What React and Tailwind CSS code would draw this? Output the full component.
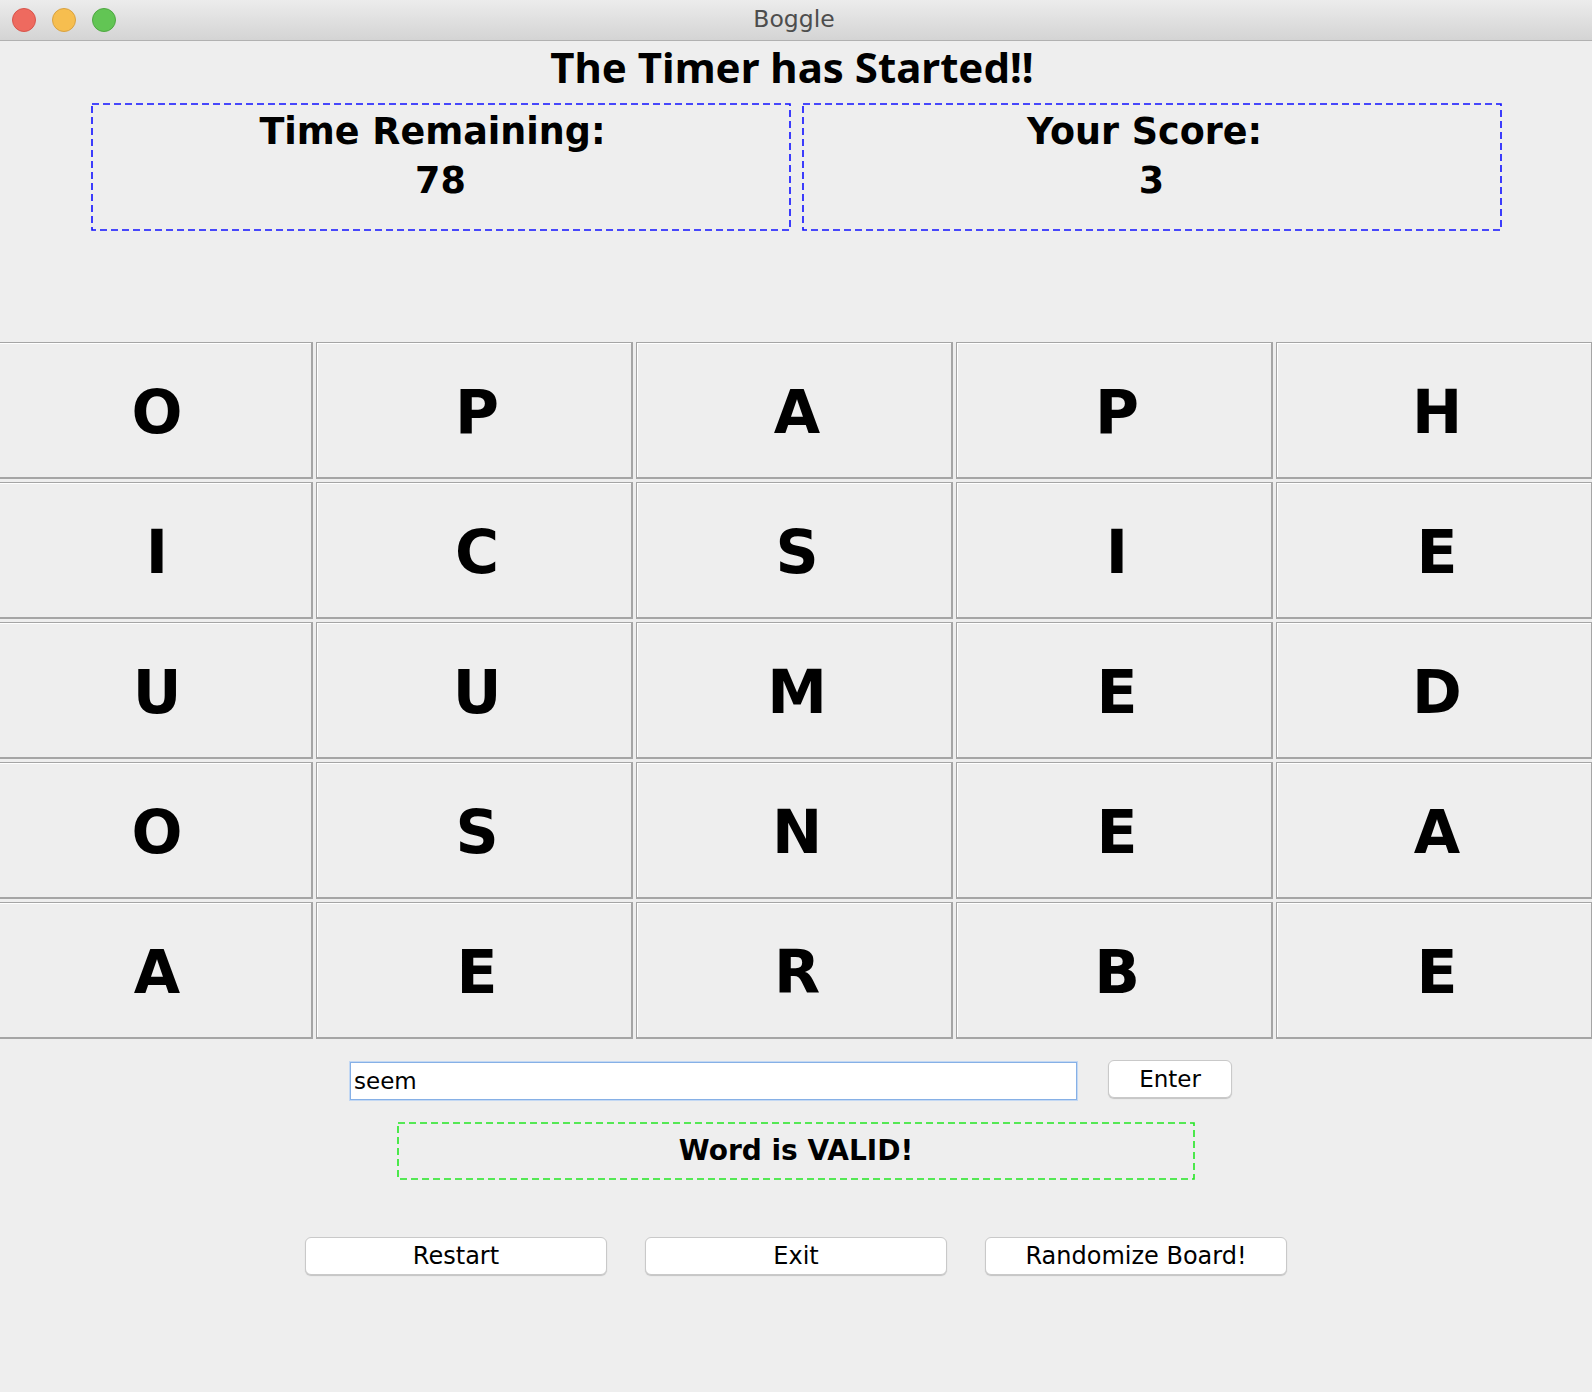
import React from 'react';

const board = [
    ['O', 'P', 'A', 'P', 'H'],
    ['I', 'C', 'S', 'I', 'E'],
    ['U', 'U', 'M', 'E', 'D'],
    ['O', 'S', 'N', 'E', 'A'],
    ['A', 'E', 'R', 'B', 'E'],
];

// dashed outline like Swing's dashed LineBorder
const DashedBox = ({ w, h, color, className, children }) => (
    <div className={`relative ${className}`} style={{ width: w, height: h }}>
        <svg className="absolute inset-0 pointer-events-none" width={w} height={h}>
            <rect x="1" y="1" width={w - 2} height={h - 2} fill="none" stroke={color} strokeWidth="1.6" strokeDasharray="7 4" />
        </svg>
        {children}
    </div>
);

const TitleBar = () => (
    <div className="relative h-[41px] flex items-center pl-[12px] gap-[16px] bg-gradient-to-b from-[#ececec] to-[#d4d4d4] border-b border-[#b1b1b1]">
        <span className="w-[24px] h-[24px] rounded-full bg-[#ee6a5f] border border-[#d8544b]" />
        <span className="w-[24px] h-[24px] rounded-full bg-[#f6be4f] border border-[#d9a241]" />
        <span className="w-[24px] h-[24px] rounded-full bg-[#62c554] border border-[#4fa842]" />
        <div className="absolute inset-0 flex items-center justify-center pr-[4px] text-[23.5px] text-[#4d4d4d] font-['DejaVu_Sans',sans-serif]">
            Boggle
        </div>
    </div>
);

const Button = ({ label, className }) => (
    <button className={`h-[38px] bg-white rounded-[6px] border border-[#c9c9c9] shadow-[0_1px_1px_rgba(0,0,0,0.18)] text-black font-['DejaVu_Sans',sans-serif] ${className}`}>
        {label}
    </button>
);

export default function App() {
    return (
        <div className="w-[1592px] min-h-[1392px] overflow-hidden bg-[#eeeeee] text-black">
            <TitleBar />

            <div className="pt-[2px] pr-[8px] text-center text-[42px] leading-[48px] font-bold font-['Noto_Sans',sans-serif]">
                The Timer has Started!!
            </div>

            <div className="mt-[12px] flex justify-center gap-[11px]">
                <DashedBox w={700} h={128} color="#1010ff" className="pt-[4px]">
                    <div className="flex flex-col items-center text-[36.5px] leading-[49px] font-bold font-['DejaVu_Sans',sans-serif]">
                        <span className="pr-[16px]">Time Remaining:</span>
                        <span>78</span>
                    </div>
                </DashedBox>
                <DashedBox w={700} h={128} color="#1010ff" className="pt-[4px]">
                    <div className="flex flex-col items-center text-[36.5px] leading-[49px] font-bold font-['DejaVu_Sans',sans-serif]">
                        <span className="pr-[14px]">Your Score:</span>
                        <span>3</span>
                    </div>
                </DashedBox>
            </div>

            <div className="mt-[111px] ml-[-4px] w-[1597px] grid grid-cols-5 gap-x-[3px] gap-y-[3px]">
                {board.flat().map((ch, i) => (
                    <div
                        key={i}
                        className="h-[137px] pt-[3px] pl-[6px] flex items-center justify-center bg-[#eeeeee] border-t border-l border-r-2 border-b-2 border-[#a5a5a5] shadow-[inset_1px_1px_0_#ffffff] text-[60px] leading-none font-bold font-['DejaVu_Sans',sans-serif]"
                    >
                        {ch}
                    </div>
                ))}
            </div>

            <div className="mt-[21px] flex justify-center items-start gap-[31px] pr-[10px]">
                <div className="mt-[2px] w-[727px] h-[38px] bg-white border border-[#86b0e6] shadow-[0_0_0_1px_#c3d8f3] flex items-center pl-[3px] text-[23px] font-['DejaVu_Sans',sans-serif]">
                    seem
                </div>
                <Button label="Enter" className="w-[124px] text-[23px]" />
            </div>

            <div className="mt-[22px] flex justify-center">
                <DashedBox w={798} h={58} color="#22e622" className="flex items-center justify-center">
                    <span className="text-[28px] font-bold font-['DejaVu_Sans',sans-serif]">Word is VALID!</span>
                </DashedBox>
            </div>

            <div className="mt-[57px] flex justify-center gap-[38px]">
                <Button label="Restart" className="w-[302px] text-[24px]" />
                <Button label="Exit" className="w-[302px] text-[24px]" />
                <Button label="Randomize Board!" className="w-[302px] text-[24px]" />
            </div>
        </div>
    );
}
